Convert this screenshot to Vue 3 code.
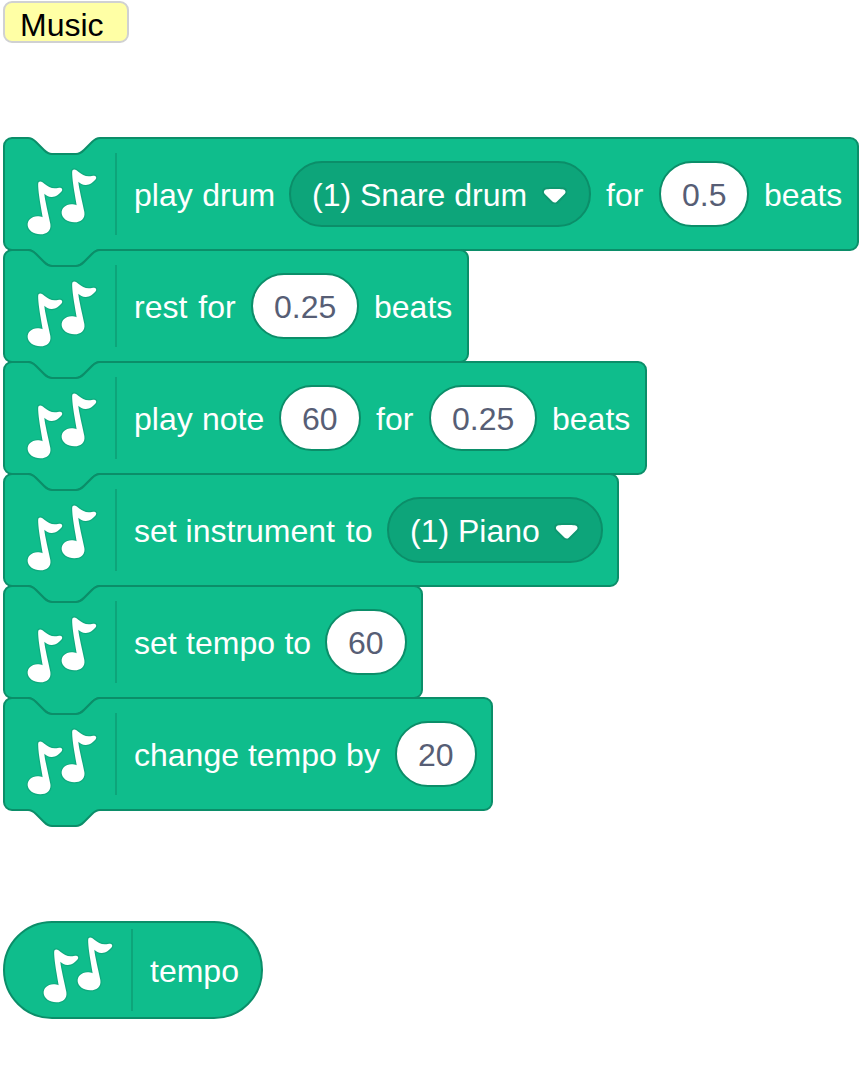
<script setup>
// `tracking` is the extra word spacing after each word of a label, in px.
const label = (text, width, tracking = []) => ({
  kind: 'label',
  width,
  words: text.split(' ').map((word, i, all) => ({
    word: i < all.length - 1 ? word + ' ' : word,
    extra: tracking[i] || 0,
  })),
})
// Fields straddle their layout slot by half of the 2px border on each side.
const field = (kind) => (text, width) => ({ kind, words: [{ word: text, extra: 0 }], width: width + 2 })
const input = field('input')
const menu = field('menu')

const blocks = [
  { width: 854, parts: [label('play drum', 140, [0.6]), menu('(1) Snare drum', 300), label('for', 38), input('0.5', 88), label('beats', 78)] },
  { width: 464, parts: [label('rest for', 102, [2]), input('0.25', 106), label('beats', 78)] },
  { width: 642, parts: [label('play note', 130, [0.4]), input('60', 80), label('for', 38), input('0.25', 106), label('beats', 78)] },
  { width: 614, parts: [label('set instrument to', 238, [0, 2]), menu('(1) Piano', 214)] },
  { width: 418, parts: [label('set tempo to', 176, [0.5, 0.5]), input('60', 80)] },
  { width: 488, parts: [label('change tempo by', 246, [0, 0.4]), input('20', 80)] },
]

// Outline of a stack block in half-size units: notch on top, tab below.
const outline = (w) =>
  'M0,4 A4,4 0 0,1 4,0 H12 c2,0 3,1 4,2 l4,4 c1,1 2,2 4,2 h12 c2,0 3,-1 4,-2 l4,-4 c1,-1 2,-2 4,-2 ' +
  `H${w / 2 - 4} a4,4 0 0,1 4,4 v48 a4,4 0 0,1 -4,4 ` +
  'H48 c-2,0 -3,1 -4,2 l-4,4 c-1,1 -2,2 -4,2 h-12 c-2,0 -3,-1 -4,-2 l-4,-4 c-1,-1 -2,-2 -4,-2 H4 a4,4 0 0,1 -4,-4 z'

const note =
  'M156.5 36C156.5 31 159 28.5 163 28.5C166 28.5 170 31 175 35C185 43 194 49 206 49C214 49 218 47 223 47' +
  'C229 48 230 53 227 58C220 67 208 76 196 75C187 74 181 70 175 65C176 82 187 125 193 156' +
  'C196 175 184 187 163 187C143 187 126 175 125 160C124 145 136 134 154 133C160 133 166 134 170 136' +
  'C169 125 156 65 156.5 36Z'
</script>

<template>
  <main class="workspace">
    <div class="comment">Music</div>

    <div class="stack">
      <div v-for="(b, i) in blocks" :key="i" class="block" :style="{ width: b.width + 'px' }">
        <svg class="shape" :width="b.width" height="112">
          <path :d="outline(b.width)" transform="scale(2)" />
        </svg>
        <svg class="icon" width="80" height="80" viewBox="0 6 240 240">
          <path :d="note" transform="translate(-102 36)" />
          <path :d="note" />
        </svg>
        <span class="divider"></span>
        <div class="parts">
          <span v-for="(p, j) in b.parts" :key="j" :class="['part', p.kind]" :style="{ width: p.width + 'px' }">
            <span class="text"><span v-for="(w, k) in p.words" :key="k" :style="{ wordSpacing: w.extra + 'px' }">{{ w.word }}</span></span>
            <svg v-if="p.kind === 'menu'" class="arrow" width="25.42" height="17.58" viewBox="0 0 12.71 8.79">
              <path class="arrow-shadow" d="M12.71,2.44A2.41,2.41,0,0,1,12,4.16L8.08,8.08a2.45,2.45,0,0,1-3.45,0L0.72,4.16A2.42,2.42,0,0,1,0,2.44,2.48,2.48,0,0,1,.71.71C1,0.47,1.43,0,6.36,0S11.75,0.46,12,.71A2.44,2.44,0,0,1,12.71,2.44Z" />
              <path class="arrow-face" d="M6.36,7.79a1.43,1.43,0,0,1-1-.42L1.42,3.45a1.44,1.44,0,0,1,0-2c0.56-.56,9.31-0.56,9.87,0a1.44,1.44,0,0,1,0,2L7.37,7.37A1.43,1.43,0,0,1,6.36,7.79Z" />
            </svg>
          </span>
        </div>
      </div>
    </div>

    <div class="reporter">
      <svg class="icon" width="80" height="80" viewBox="0 6 240 240">
        <path :d="note" transform="translate(-102 36)" />
        <path :d="note" />
      </svg>
      <span class="divider"></span>
      <span class="part label">tempo</span>
    </div>
  </main>
</template>

<style>
body {
  background: #fff;
}
</style>

<style scoped>
.workspace {
  box-sizing: border-box;
  width: 862px;
  height: 1092px;
  padding: 1px 0 0 3px;
  overflow: hidden;
  font: 32px/36px "Liberation Sans", Arial, sans-serif;
}
.comment {
  box-sizing: border-box;
  width: 126px;
  height: 42px;
  padding: 4px 0 0 15px;
  border: 2px solid #d0d1d2;
  border-radius: 9px;
  background: #ffffa5;
  color: #000;
}
.stack {
  display: flex;
  flex-direction: column;
  margin: 95px 0 0 1px;
}
.block {
  position: relative;
  display: flex;
  box-sizing: border-box;
  height: 112px;
  padding-left: 16px;
}
.shape {
  position: absolute;
  left: 0;
  top: 0;
  overflow: visible;
}
.shape path {
  fill: #0fbd8c;
  stroke: #0b8e69;
  stroke-width: 1;
}
.icon {
  position: relative;
  flex: none;
  margin-top: 24px;
  overflow: visible;
}
.icon path {
  fill: #fff;
  stroke: #0eaa7e;
  stroke-width: 7;
  stroke-linejoin: round;
  paint-order: stroke;
}
.divider {
  position: relative;
  flex: none;
  width: 2px;
  height: 82px;
  margin: 15px 17px 0 15px;
  background: #0da57a;
}
.parts {
  position: relative;
  display: flex;
  align-items: center;
  gap: 16px;
  height: 112px;
}
.part {
  flex: none;
  white-space: pre;
}
.label {
  color: #fff;
  padding-top: 2px;
}
.input,
.menu {
  display: flex;
  align-items: center;
  box-sizing: border-box;
  height: 66px;
  margin: 0 -1px;
  padding-left: 21px;
  border: 2px solid #0b8e69;
  border-radius: 33px;
}
.input {
  background: #fff;
  color: #575e75;
}
.menu {
  background: #0da57a;
  color: #fff;
}
.text {
  flex: none;
}
.input .text,
.menu .text {
  padding-top: 2px;
}
.menu .arrow {
  flex: none;
  margin: 3px 21.6px 0 auto;
}
.arrow-shadow {
  fill: #231f20;
  opacity: 0.1;
}
.arrow-face {
  fill: #fff;
}
.reporter {
  display: flex;
  box-sizing: border-box;
  width: 260px;
  height: 98px;
  margin-top: 111px;
  padding-left: 31px;
  border: 2px solid #0b8e69;
  border-radius: 49px;
  background: #0fbd8c;
}
.reporter .icon {
  margin-top: 7px;
}
.reporter .divider {
  margin-top: 6px;
}
.reporter .label {
  padding-top: 30px;
}
</style>
